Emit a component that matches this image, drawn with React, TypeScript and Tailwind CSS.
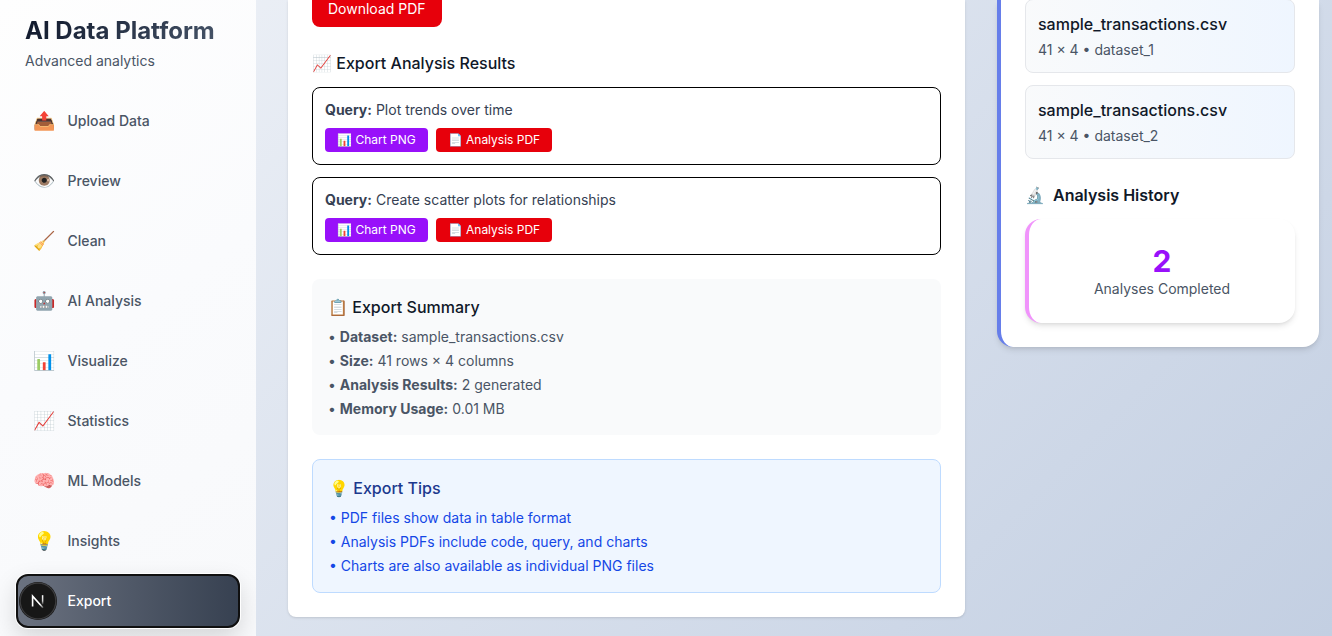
import React from "react";

const navItems = [
  { icon: "📤", label: "Upload Data" },
  { icon: "👁️", label: "Preview" },
  { icon: "🧹", label: "Clean" },
  { icon: "🤖", label: "AI Analysis" },
  { icon: "📊", label: "Visualize" },
  { icon: "📈", label: "Statistics" },
  { icon: "🧠", label: "ML Models" },
  { icon: "💡", label: "Insights" },
];

const queries = ["Plot trends over time", "Create scatter plots for relationships"];

const summary = [
  ["Dataset:", "sample_transactions.csv"],
  ["Size:", "41 rows × 4 columns"],
  ["Analysis Results:", "2 generated"],
  ["Memory Usage:", "0.01 MB"],
];

const tips = [
  "PDF files show data in table format",
  "Analysis PDFs include code, query, and charts",
  "Charts are also available as individual PNG files",
];

function DevBadge() {
  return (
    <svg className="absolute left-0 top-[5px] size-[40px]" viewBox="0 0 40 40" fill="none">
      <defs>
        <linearGradient id="stem" x1="0" y1="14" x2="0" y2="24" gradientUnits="userSpaceOnUse">
          <stop stopColor="#fff" />
          <stop offset="0.6" stopColor="#fff" stopOpacity="0.8" />
          <stop offset="1" stopColor="#fff" stopOpacity="0" />
        </linearGradient>
        <linearGradient id="diag" x1="15" y1="14" x2="25.5" y2="27" gradientUnits="userSpaceOnUse">
          <stop offset="0.7" stopColor="#fff" />
          <stop offset="1" stopColor="#fff" stopOpacity="0.2" />
        </linearGradient>
      </defs>
      <circle cx="20" cy="20" r="19" fill="#171717" />
      <circle cx="20" cy="20" r="17.8" stroke="#3c3c3e" strokeWidth="1.2" />
      <path d="M14.6 25.6V15.2L25 26.8" stroke="url(#diag)" strokeWidth="1.6" />
      <path d="M24.6 14.2V23.5" stroke="url(#stem)" strokeWidth="1.5" />
    </svg>
  );
}

function Sidebar() {
  return (
    <aside className="flex w-64 shrink-0 flex-col overflow-hidden bg-linear-145 from-[#fefefe] via-[#fafbfd] to-[#f8f9fb]">
      <header className="px-[25px] pt-[15px]">
        <h1 className="w-fit bg-linear-135 from-[#0f172a] to-[#475569] bg-clip-text text-2xl font-bold text-transparent">
          AI Data Platform
        </h1>
        <p className="mt-1 text-sm text-gray-600">Advanced analytics</p>
      </header>
      <nav className="mt-[23px] flex flex-col gap-1.5 px-4">
        {navItems.map((item) => (
          <button key={item.label} className="flex h-[54px] items-center gap-[12.5px] px-[17px] text-left text-sm font-medium text-gray-600">
            <span className="text-lg">{item.icon}</span>
            <span>{item.label}</span>
          </button>
        ))}
        <button className="relative flex h-[54px] items-center rounded-xl border-2 border-[#101010] bg-linear-to-r from-[#6b7280] to-[#374151] pl-[49.5px] text-left text-sm font-medium text-white shadow-[0_0_0_1px_#fff,0_10px_25px_rgba(0,0,0,0.15)]">
          <DevBadge />
          <span>Export</span>
        </button>
      </nav>
    </aside>
  );
}

function ExportPanel() {
  return (
    <section className="flex h-[617px] w-[677px] shrink-0 flex-col justify-end rounded-b-lg bg-white px-6 pb-6 shadow-sm">
      <button className="h-9 w-fit shrink-0 rounded-lg bg-[#e7000b] px-4 text-sm text-white">
        Download PDF
      </button>
      <h3 className="mt-6 mb-3 text-base font-medium text-gray-900">📈 Export Analysis Results</h3>
      <div className="flex flex-col gap-3">
        {queries.map((query) => (
          <div key={query} className="rounded-lg border border-black p-3">
            <p className="mb-2 text-sm text-gray-700">
              <strong>Query:</strong> {query}
            </p>
            <div className="flex gap-2 text-xs text-white">
              <button className="rounded bg-[#9810fa] px-3 py-1">📊 Chart PNG</button>
              <button className="rounded bg-[#e7000b] px-3 py-1">📄 Analysis PDF</button>
            </div>
          </div>
        ))}
      </div>
      <div className="mt-6 rounded-lg bg-gray-50 p-4">
        <h3 className="mb-2 font-medium text-gray-900">📋 Export Summary</h3>
        <div className="flex flex-col gap-1 text-sm text-gray-600">
          {summary.map(([name, value]) => (
            <p key={name}>
              • <strong>{name}</strong> {value}
            </p>
          ))}
        </div>
      </div>
      <div className="mt-6 rounded-lg border border-blue-200 bg-blue-50 p-4">
        <h3 className="mb-2 font-medium text-blue-900">💡 Export Tips</h3>
        <div className="flex flex-col gap-1 text-sm text-blue-700">
          {tips.map((tip) => (
            <p key={tip}>• {tip}</p>
          ))}
        </div>
      </div>
    </section>
  );
}

function DatasetPanel() {
  return (
    <aside className="flex h-[347px] w-[322px] shrink-0 flex-col justify-end rounded-b-2xl border-l-4 border-[#667eea] bg-white px-6 pb-6 shadow-md">
      <div className="flex flex-col gap-3">
        {["dataset_1", "dataset_2"].map((name) => (
          <div key={name} className="rounded-lg border border-gray-200 bg-linear-to-r from-gray-50 to-blue-50 p-3">
            <p className="font-medium text-gray-900">sample_transactions.csv</p>
            <p className="mt-1 text-sm text-gray-600">41 × 4 • {name}</p>
          </div>
        ))}
      </div>
      <h3 className="mt-6 mb-3 flex gap-2 font-semibold text-gray-900">
        <span>🔬</span>
        <span>Analysis History</span>
      </h3>
      <div className="rounded-2xl border-l-4 border-[#f093fb] bg-white p-6 text-center shadow-md">
        <p className="text-3xl font-bold text-[#9810fa]">2</p>
        <p className="text-sm text-gray-600">Analyses Completed</p>
      </div>
    </aside>
  );
}

export default function App() {
  return (
    <div className="flex h-[636px] w-[1332px] overflow-hidden bg-linear-135 from-[#f0f3f8] to-[#c3cfe2] font-['Inter',sans-serif]">
      <Sidebar />
      <main className="flex items-start gap-8 pl-8">
        <ExportPanel />
        <DatasetPanel />
      </main>
    </div>
  );
}
